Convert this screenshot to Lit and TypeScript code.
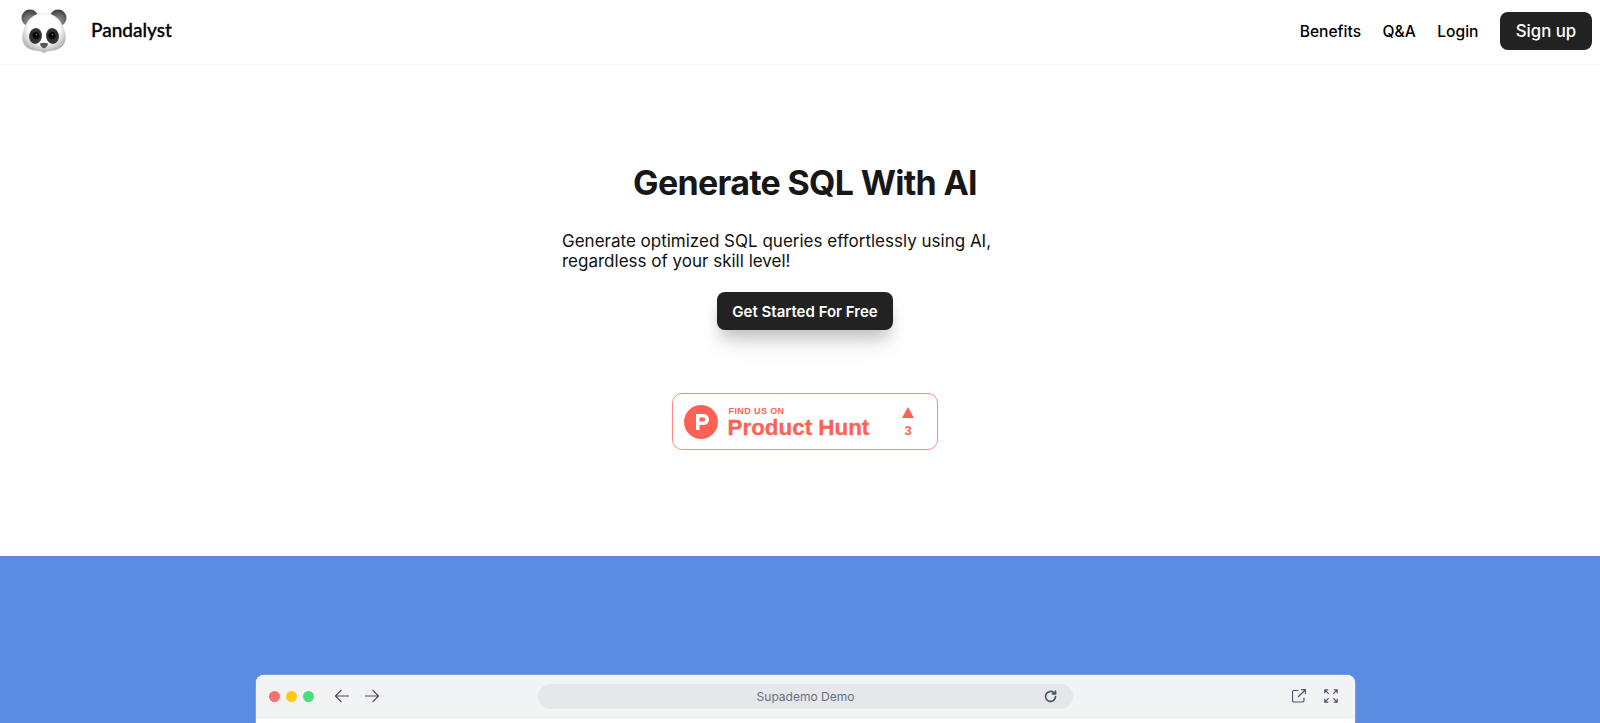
import { LitElement, html, css } from "lit";
import { customElement } from "lit/decorators.js";

@customElement("app-root")
export class AppRoot extends LitElement {
  static styles = css`
    :host {
      display: block;
      height: 723px;
      overflow: hidden;
      background: #fff;
      font-family: Inter, sans-serif;
      color: #111;
    }
    .nav {
      height: 65px;
      box-sizing: border-box;
      border-bottom: 1px solid #f3f4f6;
      display: flex;
      align-items: center;
      justify-content: space-between;
      padding: 0 8px 2px 20px;
    }
    .brand {
      display: flex;
      align-items: center;
      gap: 23px;
    }
    .brand svg {
      width: 48px;
      height: 44px;
      display: block;
    }
    .brand span {
      font-family: Lato, sans-serif;
      font-size: 19px;
      font-weight: 500;
      color: #000;
      margin-bottom: 4px;
      -webkit-text-stroke: 0.3px #000;
    }
    .links {
      display: flex;
      align-items: center;
      gap: 21.5px;
      font-size: 15.6px;
      font-weight: 500;
      color: #000;
    }
    .signup {
      background: #222;
      color: #fff;
      border-radius: 8px;
      height: 38px;
      width: 92px;
      display: flex;
      align-items: center;
      justify-content: center;
      font-size: 16.8px;
      font-weight: 500;
    }
    .hero {
      height: 491px;
      box-sizing: border-box;
      padding: 98px 0 0 10px;
      display: flex;
      flex-direction: column;
      align-items: center;
    }
    h1 {
      margin: 0;
      font-size: 34px;
      line-height: 40px;
      font-weight: 700;
      letter-spacing: -0.7px;
      color: #171717;
    }
    .sub {
      margin: 28px 0 0;
      width: 486px;
      font-size: 17px;
      line-height: 20px;
      color: #111;
    }
    .cta {
      margin-top: 21px;
      width: 176px;
      height: 38px;
      border-radius: 8px;
      background: #222;
      color: #fff;
      font-size: 15px;
      font-weight: 600;
      display: flex;
      align-items: center;
      justify-content: center;
      box-shadow: 0 10px 15px -3px rgba(0, 0, 0, 0.2), 0 20px 25px -5px rgba(0, 0, 0, 0.08);
    }
    .ph {
      margin-top: 63px;
      box-sizing: border-box;
      width: 266px;
      height: 57px;
      border: 1.5px solid #ff8a80;
      border-radius: 10px;
      display: flex;
      align-items: center;
      padding: 0 23px 0 10.5px;
      color: #ff6154;
      font-family: "Liberation Sans", Arial, sans-serif;
      font-weight: 700;
    }
    .ph-logo {
      width: 34px;
      height: 34px;
      display: block;
      flex: none;
    }
    .ph-text {
      margin-left: 10px;
      flex: 1;
      display: flex;
      flex-direction: column;
      padding-top: 3px;
    }
    .ph-find {
      font-size: 9px;
      line-height: 10px;
      letter-spacing: 0.4px;
      margin-left: 1px;
    }
    .ph-name {
      font-size: 22.4px;
      line-height: 24px;
      -webkit-text-stroke: 0.3px #ff6154;
    }
    .ph-votes {
      display: flex;
      flex-direction: column;
      align-items: center;
      gap: 6px;
      font-size: 13px;
      line-height: 13px;
    }
    .tri {
      width: 0;
      height: 0;
      border-left: 6px solid transparent;
      border-right: 6px solid transparent;
      border-bottom: 11px solid #ff6154;
    }
    .band {
      height: 167px;
      background: #5c8ce2;
      padding: 119px 0 0 1px;
      box-sizing: border-box;
      display: flex;
      justify-content: center;
      overflow: hidden;
    }
    .browser {
      margin-left: 10px;
      width: 1099px;
      height: 200px;
      flex: none;
      background: #fff;
      border-radius: 8px 8px 0 0;
      overflow: hidden;
      box-shadow: 0 0 0 1px rgba(255, 255, 255, 0.15);
    }
    .bar {
      height: 43px;
      box-sizing: border-box;
      background: #f2f3f5;
      border-bottom: 1px solid #e5e7eb;
      display: grid;
      grid-template-columns: 269px 535px 1fr;
      align-items: center;
      padding: 0 17px 0 13px;
    }
    .left,
    .right {
      display: flex;
      align-items: center;
    }
    .right {
      justify-content: flex-end;
      gap: 18px;
    }
    .dot {
      width: 11px;
      height: 11px;
      border-radius: 50%;
      margin-right: 6px;
    }
    .left svg:first-of-type {
      margin-left: 15px;
    }
    .left svg {
      margin-right: 16px;
    }
    .bar svg {
      width: 14px;
      height: 14px;
      display: block;
      fill: none;
      stroke: #4b5563;
      stroke-width: 1.2;
      stroke-linecap: round;
      stroke-linejoin: round;
    }
    .url {
      height: 25px;
      border-radius: 13px;
      background: #e5e7eb;
      position: relative;
      display: flex;
      align-items: center;
      justify-content: center;
      font-size: 12px;
      color: #6b7280;
    }
    .url svg {
      position: absolute;
      right: 16px;
      top: 6px;
      width: 13px;
      height: 13px;
      stroke-width: 1.7;
    }
  `;

  render() {
    return html`
      <div class="nav">
        <div class="brand">
          <svg viewBox="0 0 48 44">
            <defs>
              <radialGradient id="face" cx="50%" cy="40%" r="58%">
                <stop offset="0.6" stop-color="#ffffff"></stop>
                <stop offset="1" stop-color="#b4b4b4"></stop>
              </radialGradient>
              <radialGradient id="ear" cx="50%" cy="75%" r="75%">
                <stop offset="0" stop-color="#a0a0a0"></stop>
                <stop offset="1" stop-color="#3c3c3c"></stop>
              </radialGradient>
              <radialGradient id="eye" cx="50%" cy="50%" r="55%">
                <stop offset="0" stop-color="#222"></stop>
                <stop offset="0.75" stop-color="#333"></stop>
                <stop offset="1" stop-color="#666"></stop>
              </radialGradient>
            </defs>
            <circle cx="10" cy="9" r="8.500" fill="url(#ear)"></circle>
            <circle cx="38" cy="9" r="8.500" fill="url(#ear)"></circle>
            <path d="M24 4C13 4 7 11 3.500 21C0.500 31 3 38 12 41C16 42 20 41.500 24 44C28 41.500 32 42 36 41C45 38 47.500 31 44.500 21C41 11 35 4 24 4Z" fill="url(#face)"></path>
            <ellipse cx="15.500" cy="27" rx="6.500" ry="8" fill="url(#eye)" transform="rotate(8 15.500 27)"></ellipse>
            <ellipse cx="32.500" cy="27" rx="6.500" ry="8" fill="url(#eye)" transform="rotate(-8 32.500 27)"></ellipse>
            <circle cx="16" cy="26.500" r="3.400" fill="#050505"></circle>
            <circle cx="32" cy="26.500" r="3.400" fill="#050505"></circle>
            <circle cx="16.500" cy="25.500" r="0.700" fill="#888"></circle>
            <circle cx="32.500" cy="25.500" r="0.700" fill="#888"></circle>
            <path d="M20 34.500Q24 33 28 34.500Q28 37.500 24 39.500Q20 37.500 20 34.500Z" fill="#555"></path>
          </svg>
          <span>Pandalyst</span>
        </div>
        <div class="links">
          <span>Benefits</span>
          <span>Q&amp;A</span>
          <span>Login</span>
          <div class="signup">Sign up</div>
        </div>
      </div>
      <div class="hero">
        <h1>Generate SQL With AI</h1>
        <p class="sub">Generate optimized SQL queries effortlessly using AI,<br />regardless of your skill level!</p>
        <div class="cta">Get Started For Free</div>
        <div class="ph">
          <svg class="ph-logo" viewBox="0 0 34 34">
            <circle cx="17" cy="17" r="17" fill="#ff6154"></circle>
            <path d="M12 9H19.500A5.500 5.500 0 0 1 19.500 20H15.500V25H12ZM15.500 12.400V16.600H19.300A2.100 2.100 0 0 0 19.300 12.400Z" fill="#fff"></path>
          </svg>
          <div class="ph-text">
            <div class="ph-find">FIND US ON</div>
            <div class="ph-name">Product Hunt</div>
          </div>
          <div class="ph-votes">
            <div class="tri"></div>
            <div>3</div>
          </div>
        </div>
      </div>
      <div class="band">
        <div class="browser">
          <div class="bar">
            <div class="left">
              <div class="dot" style="background:#f87171"></div>
              <div class="dot" style="background:#fbca14"></div>
              <div class="dot" style="background:#4ade80"></div>
              <svg viewBox="0 0 14 14"><path d="M13.500 7H0.500M6 1.500L0.500 7L6 12.500"></path></svg>
              <svg viewBox="0 0 14 14"><path d="M0.500 7H13.500M8 1.500L13.500 7L8 12.500"></path></svg>
            </div>
            <div class="url">
              Supademo Demo
              <svg viewBox="0 0 13 13"><path d="M11.500 6.500A5 5 0 1 1 9.800 2.700M11.500 1V4H8.500"></path></svg>
            </div>
            <div class="right">
              <svg viewBox="0 0 14 14"><path d="M6 1.500H2A1.500 1.500 0 0 0 0.500 3V11.500A1.500 1.500 0 0 0 2 13H10.500A1.500 1.500 0 0 0 12 11.500V9M6.500 7.500L13.500 0.700M9.500 0.700H13.500V4.700"></path></svg>
              <svg viewBox="0 0 14 14"><path d="M0.800 3.800V0.800H3.800M0.800 0.800L4.300 4.300M10.200 0.800H13.200V3.800M13.200 0.800L9.700 4.300M0.800 10.200V13.200H3.800M0.800 13.200L4.300 9.700M13.200 10.200V13.200H10.200M13.200 13.200L9.700 9.700"></path></svg>
            </div>
          </div>
        </div>
      </div>
    `;
  }
}
